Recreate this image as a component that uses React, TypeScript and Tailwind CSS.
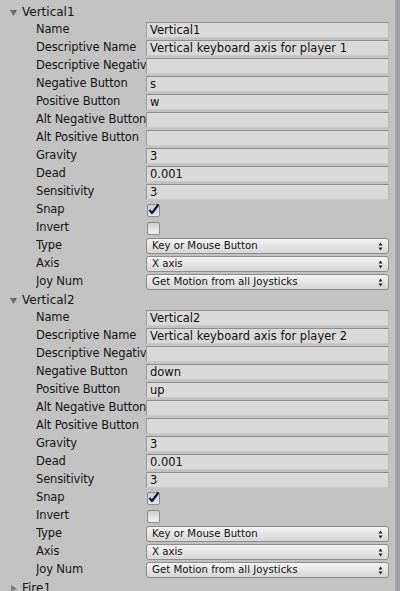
import React from 'react'

type Field =
  | { kind: 'text'; label: string; value: string }
  | { kind: 'check'; label: string; value: boolean }
  | { kind: 'select'; label: string; value: string }

function axisFields(name: string, desc: string, neg: string, pos: string): Field[] {
  return [
    { kind: 'text', label: 'Name', value: name },
    { kind: 'text', label: 'Descriptive Name', value: desc },
    { kind: 'text', label: 'Descriptive Negative Name', value: '' },
    { kind: 'text', label: 'Negative Button', value: neg },
    { kind: 'text', label: 'Positive Button', value: pos },
    { kind: 'text', label: 'Alt Negative Button', value: '' },
    { kind: 'text', label: 'Alt Positive Button', value: '' },
    { kind: 'text', label: 'Gravity', value: '3' },
    { kind: 'text', label: 'Dead', value: '0.001' },
    { kind: 'text', label: 'Sensitivity', value: '3' },
    { kind: 'check', label: 'Snap', value: true },
    { kind: 'check', label: 'Invert', value: false },
    { kind: 'select', label: 'Type', value: 'Key or Mouse Button' },
    { kind: 'select', label: 'Axis', value: 'X axis' },
    { kind: 'select', label: 'Joy Num', value: 'Get Motion from all Joysticks' },
  ]
}

const axes = [
  { title: 'Vertical1', open: true, fields: axisFields('Vertical1', 'Vertical keyboard axis for player 1', 's', 'w') },
  { title: 'Vertical2', open: true, fields: axisFields('Vertical2', 'Vertical keyboard axis for player 2', 'down', 'up') },
  { title: 'Fire1', open: false, fields: [] as Field[] },
]

function Foldout({ open }: { open: boolean }) {
  return (
    <svg width="9" height="9" viewBox="0 0 9 9" className="shrink-0">
      {open ? <path d="M1 2 L8 2 L4.5 8 Z" fill="#6b6b6b" /> : <path d="M2 1 L8 4.5 L2 8 Z" fill="#7a7a7a" />}
    </svg>
  )
}

function Arrows() {
  return (
    <svg width="5" height="9" viewBox="0 0 5 9">
      <path d="M2.5 0.5 L4.5 3.5 L0.5 3.5 Z" fill="#222" />
      <path d="M2.5 8.5 L4.5 5.5 L0.5 5.5 Z" fill="#222" />
    </svg>
  )
}

function Control({ f }: { f: Field }) {
  if (f.kind === 'text') {
    return (
      <div className="h-[16px] flex-1 border border-t-[#8e8e8e] border-l-[#9c9c9c] border-r-[#b9b9b9] border-b-[#c9c9c9] bg-[#d9d9d9] pl-[3px] leading-[14px] text-[#101010] overflow-hidden whitespace-nowrap">
        {f.value}
      </div>
    )
  }
  if (f.kind === 'check') {
    return (
      <div className="flex-1 flex items-center pl-[1px]">
        <div className={`relative h-[13px] w-[13px] rounded-[2px] border border-[#8a8a8a] ${f.value ? 'bg-gradient-to-b from-[#c7cbe0] to-[#e4e6ee]' : 'bg-gradient-to-b from-[#cfcfcf] to-[#f0f0f0]'}`}>
          {f.value && (
            <svg width="13" height="13" viewBox="0 0 13 13" className="absolute -left-[1px] -top-[2px]">
              <path d="M2.5 7 L5 10 L11.5 1.5" stroke="#0d1a33" strokeWidth="2.2" fill="none" strokeLinejoin="round" />
            </svg>
          )}
        </div>
      </div>
    )
  }
  return (
    <div className="h-[16px] flex-1 flex items-center justify-between rounded-[3px] border border-[#8c8c8c] bg-gradient-to-b from-[#f4f4f4] to-[#d6d6d6] pl-[5px] pr-[5px] text-[10.2px] leading-[14px] text-[#111] whitespace-nowrap">
      <span>{f.value}</span>
      <Arrows />
    </div>
  )
}

export default function App() {
  return (
    <div className="flex h-[591px] w-[400px] overflow-hidden bg-[#c2c2c2] text-[11.5px] text-[#151515]" style={{ fontFamily: '"DejaVu Sans", sans-serif' }}>
      <div className="flex-1 pt-[3px] pr-[6px]">
        {axes.map((a) => (
          <div key={a.title}>
            <div className="flex h-[18px] items-center gap-[4px] pl-[9px]">
              <Foldout open={a.open} />
              <span className="text-[12px]">{a.title}</span>
            </div>
            {a.open &&
              a.fields.map((f) => (
                <div key={f.label} className="flex h-[18px] items-center pl-[36px]">
                  <div className="w-[110px] shrink-0 overflow-hidden whitespace-nowrap tracking-[-0.15px]">{f.label}</div>
                  <Control f={f} />
                </div>
              ))}
          </div>
        ))}
      </div>
      <div className="w-[5px] border-l border-[#a4a4a4] bg-[#9aa0a8]" />
    </div>
  )
}
